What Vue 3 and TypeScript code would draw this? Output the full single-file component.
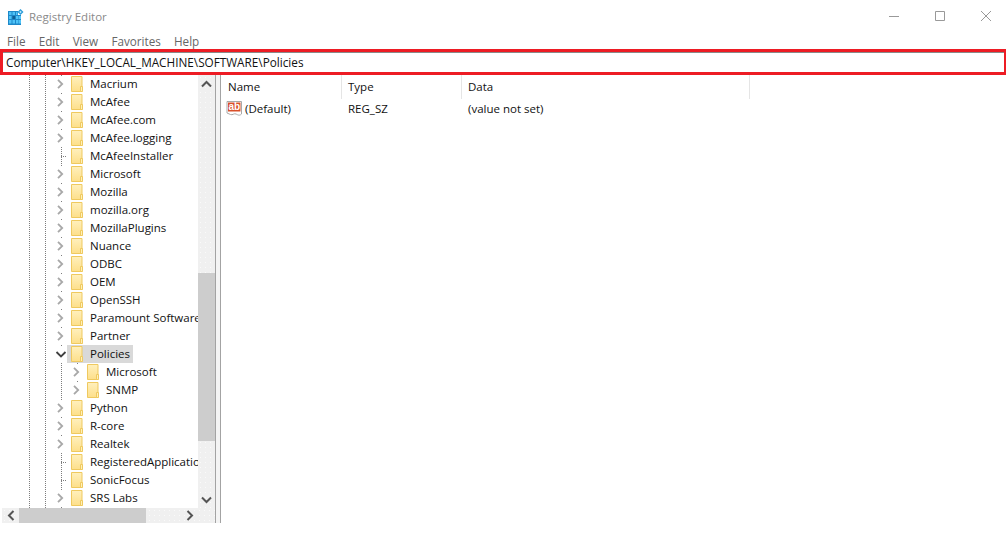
<script setup lang="ts">
interface Node {
  label: string
  kind: 'closed' | 'open' | 'leaf'
  child?: boolean
  selected?: boolean
}

const closed = (label: string): Node => ({ label, kind: 'closed' })
const leaf = (label: string): Node => ({ label, kind: 'leaf' })

const nodes: Node[] = [
  closed('Macrium'),
  closed('McAfee'),
  closed('McAfee.com'),
  closed('McAfee.logging'),
  leaf('McAfeeInstaller'),
  closed('Microsoft'),
  closed('Mozilla'),
  closed('mozilla.org'),
  closed('MozillaPlugins'),
  closed('Nuance'),
  closed('ODBC'),
  closed('OEM'),
  closed('OpenSSH'),
  closed('Paramount Software'),
  closed('Partner'),
  { label: 'Policies', kind: 'open', selected: true },
  { label: 'Microsoft', kind: 'closed', child: true },
  { label: 'SNMP', kind: 'closed', child: true },
  closed('Python'),
  closed('R-core'),
  closed('Realtek'),
  leaf('RegisteredApplications'),
  leaf('SonicFocus'),
  closed('SRS Labs'),
]

const menus: string[] = ['File', 'Edit', 'View', 'Favorites', 'Help']
</script>

<template>
  <div class="window">
    <header class="titlebar">
      <svg class="app-icon" width="16" height="16" viewBox="0 0 16 16">
        <path d="M0 2h10v14H0z" fill="#1e88c9" />
        <path d="M1 3h2.500v3H1zM4.500 3H7v3H4.500zM8 3h1.500v3H8zM1 7h2.500v3H1zM8 7h4v3H8zM1 11h2.500v3.500H1zM4.500 11H7v3.500H4.500zM8 11h4v3.500H8z" fill="#4fc3f7" />
        <path d="M10 6h3v10h-3z" fill="#1e88c9" />
        <path d="M10.500 7H13v3h-2.500zM10.500 11H13v3.500h-2.500z" fill="#4fc3f7" />
        <path d="M4.500 7H7v3H4.500z" fill="#0f5f94" />
        <path d="M12.500 0l3 3-3 3-3-3z" fill="#2a9bd8" />
        <path d="M12.500 1.800l1.200 1.200-1.200 1.200-1.200-1.200z" fill="#bfe9fb" />
      </svg>
      <span class="title">Registry Editor</span>
      <div class="controls">
        <svg width="10" height="10" viewBox="0 0 10 10"><path d="M0 5.500h10" stroke="#999" fill="none" /></svg>
        <svg width="10" height="10" viewBox="0 0 10 10"><path d="M.5.500h9v9h-9z" stroke="#999" fill="none" /></svg>
        <svg width="10" height="10" viewBox="0 0 10 10"><path d="M0 0l10 10M10 0L0 10" stroke="#999" fill="none" /></svg>
      </div>
    </header>

    <nav class="menubar">
      <span v-for="m in menus" :key="m" class="menu">{{ m }}</span>
    </nav>

    <div class="address">
      <span class="path">Computer\HKEY_LOCAL_MACHINE\SOFTWARE\Policies</span>
    </div>

    <main class="panes">
      <section class="left">
        <div class="tree-area">
          <div class="rows">
            <div
              v-for="n in nodes"
              :key="n.label + (n.child ? '-c' : '')"
              class="row"
              :class="{ child: n.child }"
            >
              <span class="slot" :class="n.kind">
                <svg v-if="n.kind === 'closed'" width="14" height="16" viewBox="0 0 14 16">
                  <path d="M5 3.800l4.200 4.200-4.200 4.200" stroke="#a8a8a8" stroke-width="1.800" fill="none" />
                </svg>
                <svg v-else-if="n.kind === 'open'" width="14" height="16" viewBox="0 0 14 16">
                  <path d="M3.500 6l4.500 4.500L12.500 6" stroke="#404040" stroke-width="1.800" fill="none" />
                </svg>
              </span>
              <span class="node" :class="{ selected: n.selected }">
                <svg class="folder" width="12" height="16" viewBox="0 0 12 16">
                  <defs>
                    <linearGradient id="fold" x1="0" y1="0" x2="0" y2="1">
                      <stop offset="0" stop-color="#fff0bd" />
                      <stop offset="1" stop-color="#fddf8a" />
                    </linearGradient>
                  </defs>
                  <path d="M.5.500h10.500v15H.5z" fill="url(#fold)" stroke="#efc95f" />
                  <path d="M9.500 10.500h2v5h-2z" fill="#fff0b8" stroke="#efc95f" />
                </svg>
                <span class="label">{{ n.label }}</span>
              </span>
            </div>
          </div>
          <div class="vscroll">
            <button class="arrow">
              <svg width="11" height="8" viewBox="0 0 11 8"><path d="M1 6.500l4.500-4.500L10 6.500" stroke="#555" stroke-width="2" fill="none" /></svg>
            </button>
            <div class="vtrack"><div class="vthumb"></div></div>
            <button class="arrow">
              <svg width="11" height="8" viewBox="0 0 11 8"><path d="M1 1.500L5.500 6 10 1.500" stroke="#555" stroke-width="2" fill="none" /></svg>
            </button>
          </div>
        </div>
        <div class="hscroll">
          <button class="harrow">
            <svg width="8" height="11" viewBox="0 0 8 11"><path d="M6.500 1L2 5.500 6.500 10" stroke="#555" stroke-width="2" fill="none" /></svg>
          </button>
          <div class="htrack"><div class="hthumb"></div></div>
          <button class="harrow">
            <svg width="8" height="11" viewBox="0 0 8 11"><path d="M1.500 1L6 5.500 1.500 10" stroke="#555" stroke-width="2" fill="none" /></svg>
          </button>
          <div class="corner"></div>
        </div>
      </section>

      <div class="splitter"></div>

      <section class="right">
        <div class="list-head">
          <div class="col name">Name</div>
          <div class="col type">Type</div>
          <div class="col data">Data</div>
        </div>
        <div class="list-row">
          <div class="cell name">
            <svg class="ab" width="17" height="17" viewBox="0 0 17 17">
              <path d="M1 1.500h14.500v12.500c-2 2-3.500 1-5.500 0-2-1-3.500 1.500-5.500.5L1 13z" fill="#fff" stroke="#a9a9a9" />
              <rect x="2" y="2.500" width="12.500" height="9" fill="#d9502a" />
              <text x="8.250" y="10" text-anchor="middle" class="ab-text">ab</text>
            </svg>
            <span>(Default)</span>
          </div>
          <div class="cell type">REG_SZ</div>
          <div class="cell data">(value not set)</div>
        </div>
      </section>
    </main>
  </div>
</template>

<style scoped>
.window {
  width: 1006px;
  height: 560px;
  background: #fff;
  font-family: "Open Sans", "Noto Sans", "Liberation Sans", sans-serif;
  font-size: 11.5px;
  color: #111;
  overflow: hidden;
  display: flex;
  flex-direction: column;
}
.titlebar {
  height: 32px;
  flex: none;
  display: flex;
  align-items: center;
  padding-left: 8px;
  padding-top: 1px;
  box-sizing: border-box;
}
.app-icon {
  margin-right: 5px;
}
.title {
  color: #8a8a8a;
  font-size: 11.5px;
}
.controls {
  margin-left: auto;
  display: flex;
  gap: 36px;
  padding-right: 15px;
  margin-top: -1px;
}
.menubar {
  height: 17px;
  flex: none;
  display: flex;
  align-items: center;
  padding-left: 7px;
  gap: 13.200px;
  padding-bottom: 1px;
  padding-top: 2px;
  box-sizing: border-box;
}
.menu {
  color: #666;
  font-size: 11.7px;
}
.address {
  height: 26px;
  flex: none;
  box-sizing: border-box;
  border: 3px solid #ed1c24;
  border-right-width: 2px;
  display: flex;
  align-items: center;
  padding-left: 3px;
  box-shadow: inset 0 1px 0 #8a8a8a;
}
.path {
  font-size: 11.75px;
  color: #111;
}
.panes {
  height: 448px;
  flex: none;
  display: flex;
}
.left {
  width: 215px;
  flex: none;
  display: flex;
  flex-direction: column;
}
.tree-area {
  height: 433px;
  display: flex;
}
.rows {
  width: 198px;
  flex: none;
  overflow: hidden;
  background-image:
    repeating-linear-gradient(to bottom, #7d7d7d 0 1px, transparent 1px 2px),
    repeating-linear-gradient(to bottom, #7d7d7d 0 1px, transparent 1px 2px),
    repeating-linear-gradient(to bottom, #7d7d7d 0 1px, transparent 1px 2px);
  background-size: 1px 100%;
  background-position: 29px 0, 45px 0, 61px 0;
  background-repeat: no-repeat;
}
.row {
  height: 18px;
  display: flex;
  align-items: center;
  padding-left: 53px;
  white-space: nowrap;
}
.row.child {
  padding-left: 69px;
  background-image: repeating-linear-gradient(to bottom, #7d7d7d 0 1px, transparent 1px 2px);
  background-size: 1px 100%;
  background-position: 77px 0;
  background-repeat: no-repeat;
}
.slot {
  width: 14px;
  height: 16px;
  flex: none;
  display: block;
}
.slot svg {
  display: block;
}
.slot.closed,
.slot.open {
  background: #fff;
}
.slot.leaf {
  background-image: repeating-linear-gradient(to right, #7d7d7d 0 1px, transparent 1px 2px);
  background-size: 6px 1px;
  background-position: 8px 8px;
  background-repeat: no-repeat;
}
.node {
  display: flex;
  align-items: center;
  height: 18px;
  padding-left: 4px;
  background: #fff;
}
.node.selected {
  background: #d9d9d9;
  padding-right: 3px;
}
.folder {
  flex: none;
}
.label {
  margin-left: 7px;
  margin-bottom: 2px;
  font-size: 11.5px;
  color: #111;
}
.vscroll {
  width: 17px;
  flex: none;
  display: flex;
  flex-direction: column;
  background-color: #f0f0f0;
  background-image: radial-gradient(#fafafa 0.6px, transparent 0.8px);
  background-size: 5px 5px;
}
.arrow {
  height: 17px;
  flex: none;
  border: 0;
  padding: 0;
  background: none;
  display: flex;
  align-items: center;
  justify-content: center;
}
.vtrack {
  flex: 1;
  padding-top: 181px;
}
.vthumb {
  height: 168px;
  background: #cdcdcd;
}
.hscroll {
  height: 15px;
  margin-left: 2px;
  display: flex;
  background-color: #f0f0f0;
  background-image: radial-gradient(#fafafa 0.6px, transparent 0.8px);
  background-size: 5px 5px;
}
.harrow {
  width: 17px;
  flex: none;
  border: 0;
  padding: 0;
  background: none;
  display: flex;
  align-items: center;
  justify-content: center;
}
.htrack {
  width: 162px;
  flex: none;
}
.hthumb {
  width: 127px;
  height: 15px;
  background: #cdcdcd;
}
.corner {
  flex: 1;
}
.splitter {
  width: 6px;
  flex: none;
  box-sizing: border-box;
  border-left: 1.500px solid #a3a3a3;
  border-right: 1.500px solid #a3a3a3;
  background: #f4f4f4;
}
.right {
  flex: 1;
}
.list-head {
  display: flex;
  height: 24px;
  align-items: stretch;
}
.col {
  box-sizing: border-box;
  padding-left: 7px;
  padding-bottom: 2px;
  display: flex;
  align-items: center;
  border-right: 1px solid #e5e5e5;
  font-size: 11.5px;
}
.col.type,
.col.data {
  padding-left: 6px;
}
.name {
  width: 121px;
}
.type {
  width: 120px;
}
.data {
  width: 288px;
}
.list-row {
  display: flex;
  height: 18px;
}
.cell {
  box-sizing: border-box;
  padding-left: 6px;
  display: flex;
  align-items: center;
  font-size: 11.5px;
}
.cell.name {
  padding-left: 5px;
}
.ab {
  flex: none;
  margin-right: 2px;
}
.ab-text {
  font-family: "Liberation Sans", sans-serif;
  font-size: 10px;
  font-weight: 700;
  fill: #fff;
}
</style>

<style>
html,
body {
  margin: 0;
  background: #fff;
}
</style>
